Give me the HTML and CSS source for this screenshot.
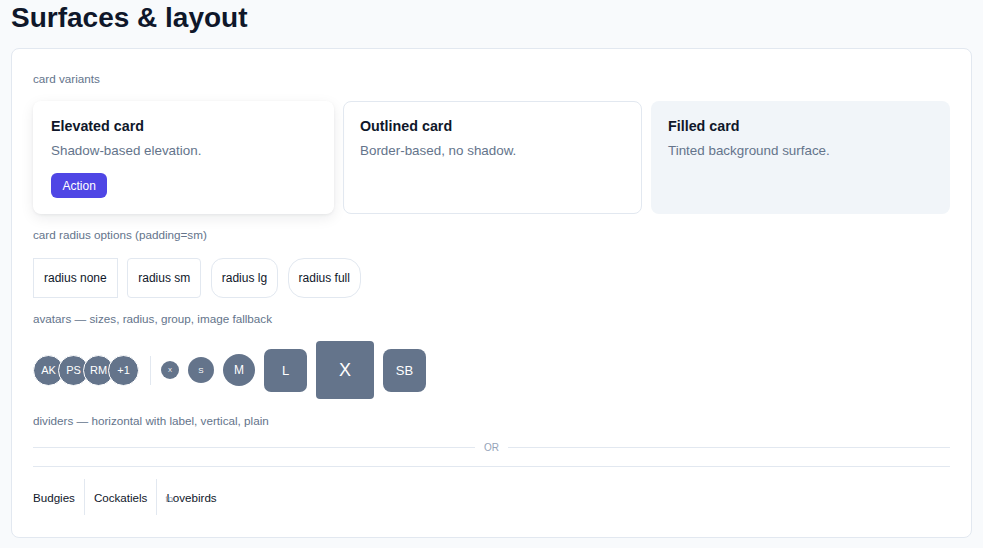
FILE: index.html
```html
<!DOCTYPE html>
<html lang="en">
<head>
<meta charset="utf-8">
<title>Surfaces &amp; layout</title>
<link rel="stylesheet" href="styles.css">
</head>
<body>
<h1 class="page-title">Surfaces &amp; layout</h1>
<div class="panel">
  <section class="section">
    <div class="label">card variants</div>
    <div class="cards">
      <div class="card card-elevated">
        <div class="card-title">Elevated card</div>
        <div class="card-desc">Shadow-based elevation.</div>
        <button class="btn">Action</button>
      </div>
      <div class="card card-outlined">
        <div class="card-title">Outlined card</div>
        <div class="card-desc">Border-based, no shadow.</div>
      </div>
      <div class="card card-filled">
        <div class="card-title">Filled card</div>
        <div class="card-desc">Tinted background surface.</div>
      </div>
    </div>
  </section>

  <section class="section">
    <div class="label">card radius options (padding=sm)</div>
    <div class="radius-row">
      <div class="rbox r-none">radius none</div>
      <div class="rbox r-sm">radius sm</div>
      <div class="rbox r-lg">radius lg</div>
      <div class="rbox r-full">radius full</div>
    </div>
  </section>

  <section class="section">
    <div class="label">avatars — sizes, radius, group, image fallback</div>
    <div class="avatar-row">
      <div class="avatar-group">
        <span class="av av-g">AK</span>
        <span class="av av-g">PS</span>
        <span class="av av-g">RM</span>
        <span class="av av-g">+1</span>
      </div>
      <span class="vsep"></span>
      <span class="av av-xs">X</span>
      <span class="av av-sm">S</span>
      <span class="av av-md">M</span>
      <span class="av av-lg">L</span>
      <span class="av av-xl">X</span>
      <span class="av av-sb">SB</span>
    </div>
  </section>

  <section class="section">
    <div class="label">dividers — horizontal with label, vertical, plain</div>
    <div class="dividers">
      <div class="divider-label"><span class="dl-line"></span><span class="dl-text">OR</span><span class="dl-line"></span></div>
      <div class="divider-plain"></div>
      <div class="vrow">
        <span class="vitem">Budgies</span>
        <span class="vline"></span>
        <span class="vitem">Cockatiels</span>
        <span class="vline"></span>
        <span class="vitem vitem-over"><span class="ghost">to</span>Lovebirds</span>
      </div>
    </div>
  </section>
</div>
</body>
</html>
```
FILE: styles.css
```css
* { box-sizing: border-box; }
html, body { margin: 0; padding: 0; }
body {
  background: #f8fafc;
  font-family: "Liberation Sans", Arial, sans-serif;
  color: #0f172a;
  padding: 2px 11px 0;
}
.page-title {
  margin: 0 0 14px;
  font-size: 28px;
  line-height: 32px;
  font-weight: 700;
  color: #0f172a;
}
.panel {
  background: #ffffff;
  border: 1px solid #e2e8f0;
  border-radius: 8px;
  padding: 25px 21px 21.5px;
  display: flex;
  flex-direction: column;
  gap: 16.3px;
}
.label {
  font-size: 11.7px;
  line-height: 10.8px;
  color: #64748b;
  margin-bottom: 16.5px;
}
.cards {
  display: flex;
  gap: 9px;
}
.card {
  flex: 1 1 0;
  border-radius: 8px;
  padding: 17px 17px 16px;
}
.card-elevated {
  padding: 17px 18px 16px;
  box-shadow: 0 4px 14px rgba(15, 23, 42, 0.08), 0 1px 3px rgba(15, 23, 42, 0.06);
}
.card-outlined { border: 1px solid #e2e8f0; padding: 16px 16px 15px; }
.card-filled { background: #f1f5f9; }
.card-title {
  font-size: 14.3px;
  font-weight: 700;
  line-height: 17.25px;
  color: #0f172a;
}
.card-desc {
  margin-top: 7px;
  font-size: 13.4px;
  line-height: 15px;
  color: #64748b;
}
.card-elevated .card-desc { margin-bottom: 15.5px; }
.btn {
  display: inline-flex;
  align-items: center;
  height: 25px;
  padding: 0 11.5px;
  border: 0;
  border-radius: 6px;
  background: #4f46e5;
  color: #ffffff;
  font-family: inherit;
  font-size: 12px;
}
.radius-row {
  display: flex;
  gap: 9.5px;
}
.rbox {
  border: 1px solid #e2e8f0;
  padding: 12px 10px;
  font-size: 12px;
  line-height: 14px;
  color: #0f172a;
}
.r-none { border-radius: 0; }
.r-sm { border-radius: 4px; }
.r-lg { border-radius: 12px; }
.r-full { border-radius: 16px; }

.avatar-row {
  display: flex;
  align-items: center;
  gap: 9px;
  height: 58px;
}
.av {
  display: inline-flex;
  align-items: center;
  justify-content: center;
  background: #64748b;
  color: #ffffff;
  border-radius: 50%;
  flex: none;
}
.avatar-group { display: flex; margin-right: 1px; }
.av-g {
  width: 31px;
  height: 31px;
  border: 1.5px solid #ffffff;
  font-size: 11px;
}
.av-g + .av-g { margin-left: -6px; }
.vsep {
  width: 1px;
  height: 29px;
  background: #e2e8f0;
  margin: 0 1px;
}
.av-xs { width: 18px; height: 18px; font-size: 6px; }
.av-sm { width: 26px; height: 26px; font-size: 8px; }
.av-md { width: 32px; height: 32px; font-size: 12px; }
.av-lg { width: 43px; height: 43px; font-size: 13px; border-radius: 7px; }
.av-xl { width: 58px; height: 58px; font-size: 18px; border-radius: 4px; }
.av-sb { width: 43px; height: 43px; font-size: 13px; border-radius: 8px; }

.dividers {
  display: flex;
  flex-direction: column;
}
.divider-label {
  display: flex;
  align-items: center;
  height: 9px;
  margin-bottom: 14.5px;
}
.dl-line {
  height: 1px;
  background: #e2e8f0;
  flex: 1 1 0;
}
.dl-text {
  padding: 0 9px;
  font-size: 10px;
  line-height: 9px;
  color: #94a3b8;
}
.divider-plain {
  height: 1px;
  background: #e2e8f0;
  margin-bottom: 12px;
}
.vrow {
  display: flex;
  align-items: center;
  gap: 9px;
  height: 36px;
}
.vitem {
  font-size: 11.6px;
  color: #0f172a;
}
.vitem-over { position: relative; }
.ghost {
  position: absolute;
  left: -1px;
  top: 3px;
  font-size: 9px;
  color: #94a3b8;
}
.vline {
  width: 1px;
  align-self: stretch;
  background: #e2e8f0;
}
```
